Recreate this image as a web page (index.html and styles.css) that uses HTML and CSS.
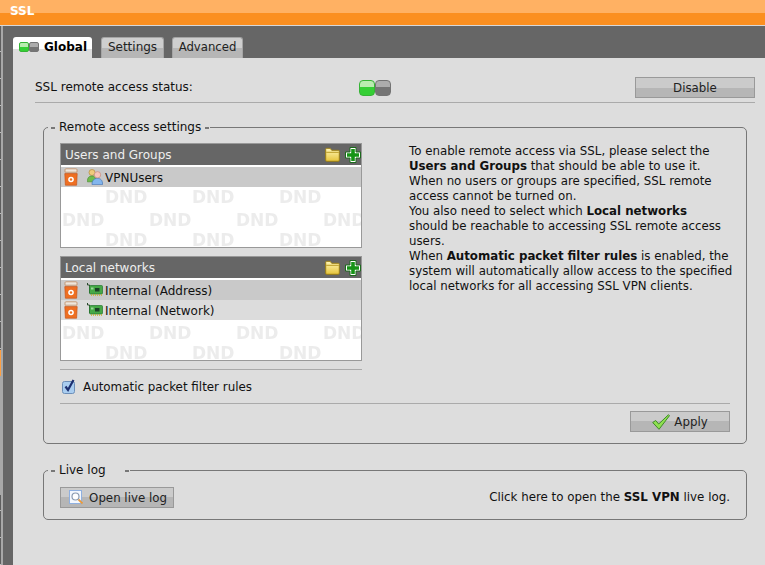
FILE: index.html
```html
<!DOCTYPE html>
<html lang="en">
<head>
<meta charset="utf-8">
<title>SSL</title>
<link rel="stylesheet" href="styles.css">
</head>
<body>
<svg class="defs" width="0" height="0" aria-hidden="true">
  <defs>
    <pattern id="dnd" patternUnits="userSpaceOnUse" width="87" height="43">
      <text class="dnd-text" x="44" y="38">DND</text>
      <text class="dnd-text" x="1" y="18">DND</text>
    </pattern>
    <linearGradient id="folderFill" x1="0" y1="0" x2="0" y2="1">
      <stop offset="0" stop-color="#fff6b8"/><stop offset="1" stop-color="#e6c43a"/>
    </linearGradient>
    <symbol id="i-trash" viewBox="0 0 14 18">
      <path d="M2 .8h10q1 0 1 1v2.400H1V1.800q0-1 1-1z" fill="#eee6dc" stroke="#c08a62" stroke-width=".8"/>
      <path d="M.8 5.600h12.400l-.6 11.600H1.400z" fill="#ee6f22" stroke="#c9541a" stroke-width=".7"/>
      <circle cx="7" cy="11.500" r="2.800" fill="#fff"/><circle cx="7" cy="11.500" r="1.200" fill="#ee6f22"/>
    </symbol>
    <symbol id="i-users" viewBox="0 0 16 16">
      <circle cx="5" cy="3.500" r="3" fill="#efcb7c" stroke="#b58b3c" stroke-width=".7"/>
      <path d="M.4 12.800c0-4.300 1.600-5.800 4.600-5.800s4 1.500 4 5.800z" fill="#6fbb4d" stroke="#4d8f33" stroke-width=".7"/>
      <circle cx="10.500" cy="5.800" r="3.200" fill="#f7c6ba" stroke="#c48a7c" stroke-width=".7"/>
      <path d="M5 15.600c0-4.600 2.400-6.200 5.500-6.200s5.100 1.600 5.100 6.200z" fill="#83b6ee" stroke="#4878b8" stroke-width=".7"/>
    </symbol>
    <symbol id="i-folder" viewBox="0 0 15 15">
      <path d="M.7 13.300V2.300q0-1 1-1h3.500l1.500 2h6.600q1 0 1 1v9q0 1-1 1H1.700q-1 0-1-1z" fill="url(#folderFill)" stroke="#9a7e14" stroke-width="1"/>
      <path d="M1.200 5.300h12.600" stroke="#b89a24" stroke-width="1"/>
    </symbol>
    <symbol id="i-plus" viewBox="0 0 16 16">
      <path d="M5 .5h6v4.500h4.500v6H11v4.500H5V11H.5V5H5z" fill="#fff" stroke="#1c6a1c" stroke-width="1"/>
      <path d="M6.200 2h3.600v4.200H14v3.600H9.800V14H6.200V9.800H2V6.200h4.200z" fill="#169416"/>
    </symbol>
    <symbol id="i-nic" viewBox="0 0 16 14">
      <path d="M.5 0v2h2v8" fill="none" stroke="#2c4a2c" stroke-width="1"/>
      <rect x="2.500" y="2.500" width="13" height="8.500" rx="1" fill="#46a846" stroke="#24752f" stroke-width=".7"/>
      <rect x="8" y="5" width="4.500" height="3.500" fill="#1c4226"/>
      <rect x="4" y="4.500" width="2.500" height="2" fill="#9ad89a"/>
      <path d="M4 12h11" stroke="#c8b02a" stroke-width="1.400" stroke-dasharray="1 1"/>
    </symbol>
    <symbol id="i-check" viewBox="0 0 18 16">
      <path d="M.7 8.500l3-2 3 3.500L16.500.7l1 1L7 15.300z" fill="#8fe050" stroke="#3f8a2a" stroke-width="1"/>
    </symbol>
    <symbol id="i-log" viewBox="0 0 15 15">
      <rect x=".5" y=".5" width="12" height="13" fill="#f4f8fe" stroke="#8fb0e0" stroke-width="1"/>
      <circle cx="6.500" cy="6.500" r="3.500" fill="#fff" stroke="#8a9ab0" stroke-width="1.200"/>
      <path d="M9.500 9.500l4 4" stroke="#e89a3c" stroke-width="1.800"/>
    </symbol>
  </defs>
</svg>

<header class="titlebar">SSL</header>

<div class="shell">
  <div class="rail"></div>
  <div class="workspace">
    <nav class="tabs">
      <a class="tab tab-active"><span class="led led-on"></span><span class="led led-off"></span><span class="tab-label">Global</span></a>
      <a class="tab tab-settings">Settings</a>
      <a class="tab tab-advanced">Advanced</a>
    </nav>

    <main class="panel">
      <div class="status-row">
        <span class="status-label">SSL remote access status:</span>
        <span class="switch"><span class="led led-big led-on"></span><span class="led led-big led-off"></span></span>
        <button class="btn btn-disable">Disable</button>
      </div>

      <fieldset class="group">
        <legend class="group-title"><span class="title-text">Remote access settings</span></legend>
        <div class="settings">
          <div class="lists">
            <section class="list">
              <div class="list-head"><span class="list-title">Users and Groups</span><svg class="ico-folder"><use href="#i-folder"/></svg><svg class="ico-plus"><use href="#i-plus"/></svg></div>
              <div class="list-body">
                <svg class="dnd-layer" aria-hidden="true"><rect width="100%" height="100%" fill="url(#dnd)"/></svg>
                <div class="row row-a"><svg class="ico-trash"><use href="#i-trash"/></svg><svg class="ico-item"><use href="#i-users"/></svg>VPNUsers</div>
              </div>
            </section>
            <section class="list">
              <div class="list-head"><span class="list-title">Local networks</span><svg class="ico-folder"><use href="#i-folder"/></svg><svg class="ico-plus"><use href="#i-plus"/></svg></div>
              <div class="list-body">
                <svg class="dnd-layer" aria-hidden="true"><rect width="100%" height="100%" fill="url(#dnd)"/></svg>
                <div class="row row-a"><svg class="ico-trash"><use href="#i-trash"/></svg><svg class="ico-item"><use href="#i-nic"/></svg>Internal (Address)</div>
                <div class="row row-b"><svg class="ico-trash"><use href="#i-trash"/></svg><svg class="ico-item"><use href="#i-nic"/></svg>Internal (Network)</div>
              </div>
            </section>
            <label class="auto-rules">
              <svg class="checkbox" viewBox="0 0 14 15"><rect x=".5" y="2.500" width="12" height="12" rx="2" fill="#a9cdf0" stroke="#6d8fb8"/><path d="M3.500 7.500l2.500 3.500L11.500 1" fill="none" stroke="#1d2f70" stroke-width="2.200"/></svg>
              Automatic packet filter rules
            </label>
          </div>
          <div class="help">
            To enable remote access via SSL, please select the<br>
            <b>Users and Groups</b> that should be able to use it.<br>
            When no users or groups are specified, SSL remote<br>
            access cannot be turned on.<br>
            You also need to select which <b>Local networks</b><br>
            should be reachable to accessing SSL remote access<br>
            users.<br>
            When <b>Automatic packet filter rules</b> is enabled, the<br>
            system will automatically allow access to the specified<br>
            local networks for all accessing SSL VPN clients.
          </div>
        </div>
        <div class="apply-row">
          <button class="btn btn-apply"><svg class="ico-check"><use href="#i-check"/></svg>Apply</button>
        </div>
      </fieldset>

      <fieldset class="group group-log">
        <legend class="group-title"><span class="title-text title-log">Live log</span></legend>
        <div class="log-row">
          <button class="btn btn-log"><svg class="ico-log"><use href="#i-log"/></svg>Open live log</button>
          <span class="log-note">Click here to open the <b>SSL VPN</b> live log.</span>
        </div>
      </fieldset>
    </main>
  </div>
</div>
</body>
</html>
```

FILE: styles.css
```css
* { box-sizing: border-box; }

html, body { height: 100%; }

body {
  margin: 0;
  height: 565px;
  overflow: hidden;
  display: flex;
  flex-direction: column;
  background: #666;
  color: #111;
  font: 12px/15px "DejaVu Sans", Verdana, sans-serif;
}

.defs { position: absolute; }

.titlebar {
  height: 26px;
  padding: 4px 0 0 10px;
  color: #fff;
  font-weight: bold;
  background: linear-gradient(#ffb163 13px, #fb8f20 13px, #fb8f20 25px, #d8d8d8 25px);
}

.shell { flex: 1; display: flex; min-height: 0; }

.rail {
  width: 3px;
  border-right: 2px solid #a8a8a8;
  background:
    linear-gradient(#ff9f40, #ff9f40) 0 324px / 1px 26px no-repeat,
    linear-gradient(#a8a8a8, #a8a8a8) 0 350px / 1px 119px no-repeat,
    repeating-linear-gradient(#5e5e5e 0 25px, #c0c0c0 25px 26px, #5e5e5e 26px 27px);
}

.workspace {
  flex: 1;
  min-width: 0;
  display: flex;
  flex-direction: column;
  padding-left: 10px;
}

.tabs {
  height: 32px;
  padding-top: 11px;
  display: flex;
  gap: 8px;
  align-items: flex-start;
}

.tab {
  height: 21px;
  padding-top: 2px;
  border: 1px solid #a5a5a5;
  border-bottom: 0;
  border-radius: 3px 3px 0 0;
  background: linear-gradient(#cfcfcf 10px, #b6b6b6 10px);
  color: #222;
  display: flex;
  justify-content: center;
  align-items: flex-start;
}

.tab-settings { width: 63px; }

.tab-advanced { width: 71px; font-size: 11.7px; }

.tab-active {
  width: 79px;
  margin-right: 1px;
  padding: 3px 0 0 6px;
  border: 0;
  justify-content: flex-start;
  background: linear-gradient(#fff 12px, #ddd 12px);
  color: #000;
  font-weight: bold;
}

.tab-label { margin-left: 5px; }

.led {
  display: block;
  width: 10px;
  height: 10px;
  margin-top: 2px;
  border-radius: 2px;
}

.led-on { background: linear-gradient(#b9ecb0 45%, #35cf35 45%); border: 1px solid #36b436; }
.led-off { background: linear-gradient(#adadad 45%, #757575 45%); border: 1px solid #747474; }

.led-big { width: 16px; height: 16px; margin: 0; border-radius: 4px; }

.panel {
  flex: 1;
  padding: 19px 10px 0 22px;
  background: #ddd;
}

.status-row {
  display: flex;
  align-items: center;
  padding-bottom: 4px;
  border-bottom: 1px solid #aaa;
}

.status-label { width: 324px; }

.switch { display: flex; }

.btn {
  height: 21px;
  padding: 1px 0 0;
  display: flex;
  align-items: center;
  justify-content: center;
  border: 1px solid #999;
  background: linear-gradient(#cbcbcb 50%, #b6b6b6 50%);
  color: #222;
  font: inherit;
  font-size: 11.8px;
}

.btn-disable { width: 120px; margin-left: auto; }

.group {
  margin: 17px 8px 0;
  padding: 8px 16px 11px 16px;
  min-width: 0;
  border: 1px solid #777;
  border-radius: 5px;
}

.group-title {
  margin-left: -12px;
  padding: 0 1px 0 0;
  height: 15px;
}

.title-text {
  display: flex;
  align-items: center;
  gap: 4px;
}

.title-text::before,
.title-text::after {
  content: "";
  width: 4px;
  height: 2px;
  background: #777;
}

.title-text::before { margin-left: 3px; }

.title-log::after { margin-left: 15px; }

.settings { display: flex; gap: 47px; }

.lists { width: 302px; flex: none; }

.list {
  height: 105px;
  margin-bottom: 8px;
  border: 1px solid #999;
  background: #fff;
  display: flex;
  flex-direction: column;
}

.list-head {
  height: 21px;
  flex: none;
  padding-left: 4px;
  display: flex;
  align-items: center;
  background: #666;
  color: #eee;
}

.list-title { flex: 1; padding-top: 2px; }

.ico-folder { width: 15px; height: 15px; margin-right: 5px; }
.ico-plus { width: 16px; height: 16px; }

.list-body {
  flex: 1;
  position: relative;
  padding-top: 2px;
  overflow: hidden;
}

.dnd-layer {
  position: absolute;
  inset: 0;
  width: 100%;
  height: 100%;
  filter: blur(.6px);
}

.dnd-text {
  font: bold 17px "DejaVu Sans", Verdana, sans-serif;
  fill: #ececec;
}

.row {
  position: relative;
  height: 20px;
  padding: 2px 0 0 3px;
  display: flex;
  align-items: center;
  color: #111;
}

.row-a { background: #c9c9c9; }
.row-b { background: #dcdcdc; }

.ico-trash { width: 14px; height: 18px; margin: -2px 9px 0 0; flex: none; }
.ico-item { width: 16px; height: 16px; margin: -3px 2px 0 0; flex: none; }

.auto-rules {
  height: 34px;
  padding: 2px 0 0 2px;
  display: flex;
  align-items: center;
  gap: 8px;
  border-top: 1px solid #aaa;
  font-size: 11.9px;
}

.checkbox { width: 14px; height: 15px; margin: -3px -1px 0 0; }

.help {
  padding-top: 1px;
  font-size: 11.8px;
  white-space: nowrap;
}

.apply-row {
  display: flex;
  justify-content: flex-end;
  padding-top: 7px;
  border-top: 1px solid #aaa;
}

.btn-apply { width: 100px; gap: 4px; }

.ico-check { width: 18px; height: 16px; margin-top: -1px; }

.group-log {
  margin-top: 19px;
  padding-top: 9px;
  padding-bottom: 11px;
}

.log-row {
  display: flex;
  justify-content: space-between;
  align-items: center;
}

.log-note { font-size: 11.85px; }

.btn-log { width: 114px; gap: 5px; padding-left: 2px; }

.ico-log { width: 15px; height: 15px; margin-top: -1px; }
```
